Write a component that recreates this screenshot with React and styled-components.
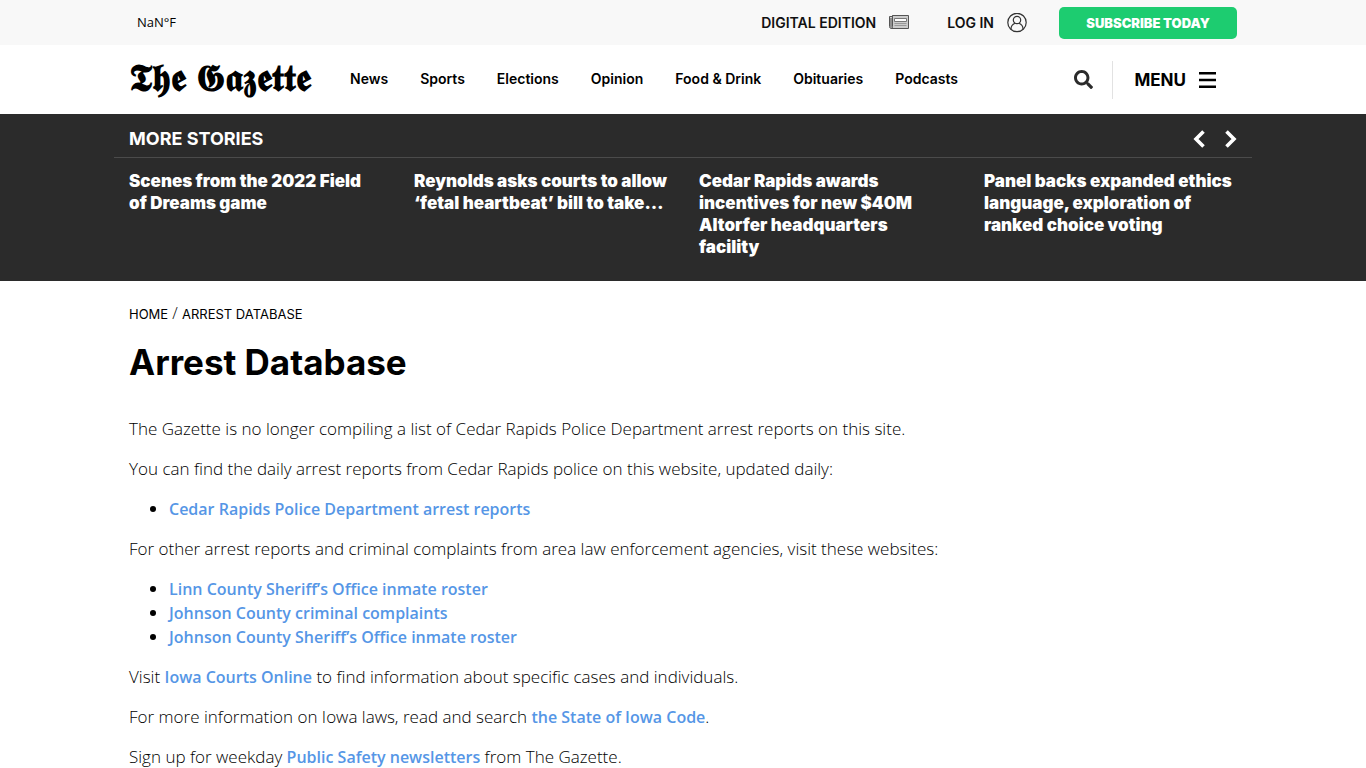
import React from "react";
import styled, { createGlobalStyle } from "styled-components";
import { FaSearch } from "react-icons/fa";

const GlobalStyle = createGlobalStyle`
  * {
    box-sizing: border-box;
  }
  body {
    margin: 0;
    background: #fff;
    color: #000;
    font-family: "Open Sans", sans-serif;
    font-size: 16px;
    line-height: 24px;
    overflow-x: hidden;
  }
  a {
    text-decoration: none;
  }
`;

const heading = `"Inter", sans-serif`;

const Container = styled.div`
  max-width: 1138px;
  margin: 0 auto;
  padding: 0 15px;
`;

const TopBar = styled.div`
  background: #f8f8f8;
`;

const TopRow = styled(Container)`
  display: flex;
  align-items: center;
  height: 45px;
`;

const Weather = styled.span`
  margin-right: auto;
  padding: 0 0 2px 8px;
  font-size: 13px;
`;

const TopLink = styled.a`
  display: flex;
  align-items: center;
  gap: 13px;
  margin-right: 38px;
  color: #111;
  font-family: ${heading};
  font-size: 14px;
  font-weight: 600;
`;

const Subscribe = styled.button`
  width: 178px;
  height: 32px;
  margin-left: -6px;
  border: 0;
  border-radius: 5px;
  background: #1dcc70;
  color: #fff;
  font-family: ${heading};
  font-size: 13px;
  font-weight: 900;
`;

const NavRow = styled(Container)`
  display: flex;
  align-items: center;
  height: 69px;
`;

const Logo = styled.a`
  width: 185px;
  margin-right: 36px;
  padding-bottom: 8px;
  color: #000;
  font-family: "Open Sans", "DejaVu Sans", sans-serif;
  font-size: 38px;
  font-weight: 700;
  line-height: 48px;
  white-space: nowrap;
`;

const NavLinks = styled.nav`
  display: flex;
  gap: 32px;
  margin-right: auto;
  padding-bottom: 2px;

  a {
    color: #000;
    font-family: ${heading};
    font-size: 14px;
    font-weight: 600;
  }
`;

const IconButton = styled.button`
  display: flex;
  padding: 0;
  border: 0;
  background: none;
  color: ${(props) => props.$color};
  cursor: pointer;
`;

const MenuButton = styled.button`
  display: flex;
  align-items: center;
  gap: 13px;
  height: 38px;
  margin-left: 19px;
  padding: 1px 21px 0;
  border: 0;
  border-left: 1px solid #e2e2e2;
  background: none;
  color: #000;
  font-family: ${heading};
  font-size: 17px;
  font-weight: 700;
  cursor: pointer;
`;

const Stories = styled.section`
  min-height: 167px;
  background: #2b2b2b;
  color: #fff;
  font-family: ${heading};
`;

const StoriesHead = styled(Container)`
  display: flex;
  align-items: center;
  gap: 20px;
  height: 44px;
  padding-top: 6px;
  border-bottom: 1px solid #4b4b4b;
`;

const StoriesTitle = styled.h2`
  margin: 0 auto 0 0;
  font-size: 18px;
  font-weight: 700;
`;

const StoryGrid = styled(Container)`
  display: grid;
  grid-template-columns: repeat(4, 1fr);
  gap: 30px;
  padding: 12px 13px 0 15px;
`;

const Story = styled.a`
  color: #fff;
  font-size: 17px;
  font-weight: 900;
  line-height: 22px;
  white-space: pre-line;
`;

const Crumbs = styled.nav`
  padding-top: 20px;
  font-weight: 300;

  a {
    color: #000;
    font-family: ${heading};
    font-size: 13px;
    font-weight: 400;
  }
`;

const Title = styled.h1`
  margin: 12px 0 31px;
  font-family: ${heading};
  font-size: 35px;
  font-weight: 700;
  line-height: 48px;
`;

const Article = styled.article`
  font-size: 17px;
  font-weight: 300;

  p,
  ul {
    margin: 0 0 16px;
  }
  ul {
    padding-left: 40px;
  }
  a {
    color: #5596e6;
    font-size: 16px;
    font-weight: 600;
  }
`;

const sections = ["News", "Sports", "Elections", "Opinion", "Food & Drink", "Obituaries", "Podcasts"];

const stories = [
  "Scenes from the 2022 Field\nof Dreams game",
  "Reynolds asks courts to allow ‘fetal heartbeat’ bill to take…",
  "Cedar Rapids awards incentives for new $40M Altorfer headquarters\nfacility",
  "Panel backs expanded ethics language, exploration of ranked choice voting",
];

function PaperIcon() {
  return (
    <svg width="20" height="15" viewBox="0 0 20 15" fill="none" stroke="#555">
      <path d="M3.5 .5h16v13h-17q-2 0-2-2v-10h3z" fill="#ccc" />
      <path d="M3.5 .5v11q0 2-1.5 2M2 3v9" />
      <path d="M5.5 3.5h12v3h-12z" fill="#fff" stroke="#777" />
      <path d="M5.5 8.5h12M5.5 10.5h12" stroke="#999" />
    </svg>
  );
}

function UserIcon() {
  return (
    <svg width="20" height="20" viewBox="0 0 20 20" fill="none" stroke="#333" strokeWidth="1.2">
      <circle cx="10" cy="9.5" r="9.2" />
      <circle cx="10" cy="7" r="3.7" />
      <path d="M4 16.3c0-3.2 2-5.2 4-6M16 16.3c0-3.2-2-5.2-4-6" />
    </svg>
  );
}

function MenuIcon() {
  return (
    <svg width="17" height="16" viewBox="0 0 17 16" stroke="#000" strokeWidth="2.4">
      <path d="M0 1.200h17M0 8h17M0 14.800h17" />
    </svg>
  );
}

function Chevron({ d }) {
  return (
    <svg width="12" height="18" viewBox="0 0 12 18" fill="none" stroke="#fff" strokeWidth="3.6">
      <path d={d} />
    </svg>
  );
}

function App() {
  return (
    <>
      <GlobalStyle />
      <TopBar>
        <TopRow>
          <Weather>NaN°F</Weather>
          <TopLink href="#">DIGITAL EDITION <PaperIcon /></TopLink>
          <TopLink href="#">LOG IN <UserIcon /></TopLink>
          <Subscribe>SUBSCRIBE TODAY</Subscribe>
        </TopRow>
      </TopBar>
      <NavRow as="header">
        <Logo href="#" aria-label="The Gazette">𝕿𝖍𝖊 𝕲𝖆𝖟𝖊𝖙𝖙𝖊</Logo>
        <NavLinks>
          {sections.map((name) => (
            <a href="#" key={name}>{name}</a>
          ))}
        </NavLinks>
        <IconButton $color="#2b2b2b" aria-label="Search"><FaSearch size={19} /></IconButton>
        <MenuButton>MENU <MenuIcon /></MenuButton>
      </NavRow>
      <Stories>
        <StoriesHead>
          <StoriesTitle>MORE STORIES</StoriesTitle>
          <IconButton $color="#fff" aria-label="Previous"><Chevron d="M10.5 1.5L3 9l7.5 7.5" /></IconButton>
          <IconButton $color="#fff" aria-label="Next"><Chevron d="M1.5 1.5L9 9l-7.5 7.5" /></IconButton>
        </StoriesHead>
        <StoryGrid>
          {stories.map((story) => (
            <Story href="#" key={story}>{story}</Story>
          ))}
        </StoryGrid>
      </Stories>
      <Container as="main">
        <Crumbs>
          <a href="#">HOME</a> / <a href="#">ARREST DATABASE</a>
        </Crumbs>
        <Title>Arrest Database</Title>
        <Article>
          <p>The Gazette is no longer compiling a list of Cedar Rapids Police Department arrest reports on this site.</p>
          <p>You can find the daily arrest reports from Cedar Rapids police on this website, updated daily:</p>
          <ul>
            <li><a href="#">Cedar Rapids Police Department arrest reports</a></li>
          </ul>
          <p>For other arrest reports and criminal complaints from area law enforcement agencies, visit these websites:</p>
          <ul>
            <li><a href="#">Linn County Sheriff’s Office inmate roster</a></li>
            <li><a href="#">Johnson County criminal complaints</a></li>
            <li><a href="#">Johnson County Sheriff’s Office inmate roster</a></li>
          </ul>
          <p>Visit <a href="#">Iowa Courts Online</a> to find information about specific cases and individuals.</p>
          <p>For more information on Iowa laws, read and search <a href="#">the State of Iowa Code</a>.</p>
          <p>Sign up for weekday <a href="#">Public Safety newsletters</a> from The Gazette.</p>
        </Article>
      </Container>
    </>
  );
}

export default App;
